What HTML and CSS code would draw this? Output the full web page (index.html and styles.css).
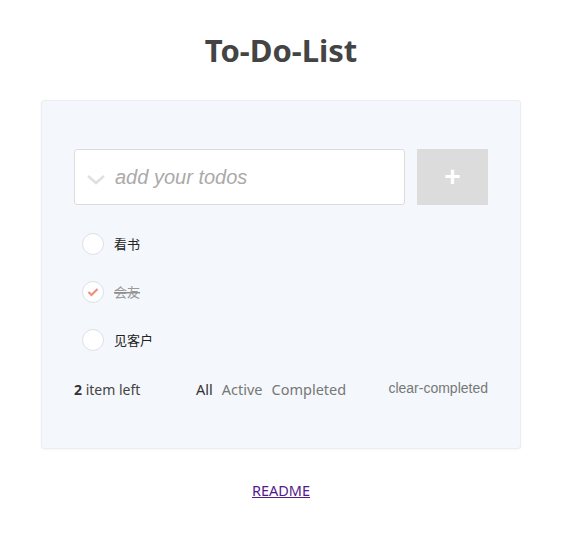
FILE: index.html
```html
<!DOCTYPE html>
<html>
<head>
<meta charset="utf-8">
<link rel="stylesheet" href="styles.css">
</head>
<body>
<div class="page">
  <h1 class="title">To-Do-List</h1>
  <div class="card">
    <div class="entry">
      <div class="input">
        <svg class="chev" width="20" height="12" viewBox="0 0 20 12"><path d="M2 2 L10 9 L18 2" fill="none" stroke="#e0e0e0" stroke-width="2.5"/></svg>
        <span class="placeholder">add your todos</span>
      </div>
      <div class="add">+</div>
    </div>
    <ul class="list">
      <li class="item"><span class="check"></span><span class="label">看书</span></li>
      <li class="item done"><span class="check"><svg width="12" height="10" viewBox="0 0 12 10"><path d="M1.5 5 L4.5 8 L10.5 2" fill="none" stroke="#ef8f7b" stroke-width="2.2"/></svg></span><span class="label">会友</span></li>
      <li class="item"><span class="check"></span><span class="label">见客户</span></li>
    </ul>
    <div class="footer">
      <span class="count"><b>2</b> item left</span>
      <span class="filters"><a class="sel">All</a><a>Active</a><a>Completed</a></span>
      <span class="clear">clear-completed</span>
    </div>
  </div>
  <div class="readme"><a href="#">README</a></div>
</div>
</body>
</html>
```

FILE: styles.css
```css
html, body { margin: 0; padding: 0; background: #fff; }
body { font-family: "Noto Sans", "Noto Sans CJK SC", sans-serif; color: #333; }
.page { width: 562px; display: flex; flex-direction: column; align-items: center; }
.title { margin: 29px 0 0; height: 42px; line-height: 42px; font-size: 31px; font-weight: 700; color: #444; }
.card { margin-top: 29px; width: 480px; box-sizing: border-box; height: 349px; padding: 48px 32px 0; background: #f4f7fb; border: 1px solid #ebedf0; border-radius: 3px; box-shadow: 0 1px 3px rgba(0,0,0,0.04); }
.entry { display: flex; gap: 12px; height: 56px; }
.input { flex: 1; display: flex; align-items: center; background: #fff; border: 1px solid #dcdcdc; border-radius: 3px; padding-left: 11px; }
.chev { margin-top: 6px; margin-right: 9px; }
.placeholder { font-family: "Liberation Sans", Arial, sans-serif; font-style: italic; font-size: 20px; color: #aaa; }
.add { width: 71px; background: #dcdcdc; color: #fff; font-family: "Liberation Sans", Arial, sans-serif; font-size: 28px; font-weight: 700; display: flex; align-items: center; justify-content: center; }
.list { list-style: none; margin: 15px 0 0; padding: 0; }
.item { height: 48px; display: flex; align-items: center; padding-left: 8px; }
.check { width: 20px; height: 20px; border: 1px solid #dbe1ea; border-radius: 50%; background: #fff; display: flex; align-items: center; justify-content: center; margin-right: 10px; }
.label { font-family: "Noto Sans CJK SC", sans-serif; font-size: 13px; line-height: 18px; color: #222; }
.done .label { color: #999; background: linear-gradient(#8f8f8f, #8f8f8f) no-repeat 0 9px / 100% 1.5px; }
.footer { display: flex; align-items: center; height: 30px; margin-top: 10px; font-size: 14px; }
.count { color: #444; width: 122px; }
.count b { color: #333; }
.filters { display: flex; gap: 9px; font-size: 14.5px; }
.filters a { color: #777; }
.filters a.sel { color: #333; }
.clear { margin-left: auto; font-family: "Liberation Sans", Arial, sans-serif; font-size: 14px; color: #777; margin-top: -3px; }
.readme { margin-top: 31px; font-size: 14.5px; }
.readme a { color: #551a8b; }
```
